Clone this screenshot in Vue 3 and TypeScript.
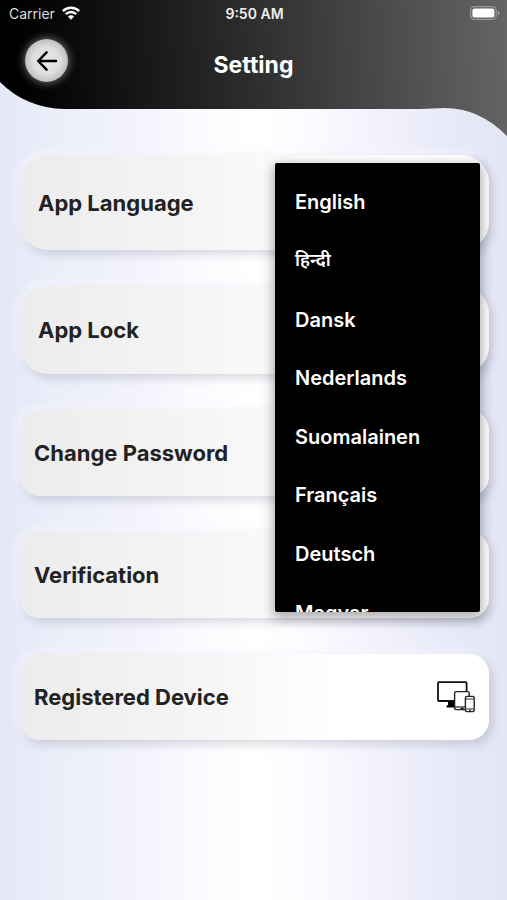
<script setup lang="ts">
import { ref } from 'vue'

interface Setting {
  label: string
  kind: 'language' | 'lock' | 'plain' | 'device'
}

interface Language {
  name: string
  code: string
}

const settings: Setting[] = [
  { label: 'App Language', kind: 'language' },
  { label: 'App Lock', kind: 'lock' },
  { label: 'Change Password', kind: 'plain' },
  { label: 'Verification', kind: 'plain' },
  { label: 'Registered Device', kind: 'device' },
]

const languages: Language[] = [
  { name: 'English', code: 'en' },
  { name: 'हिन्दी', code: 'hi' },
  { name: 'Dansk', code: 'da' },
  { name: 'Nederlands', code: 'nl' },
  { name: 'Suomalainen', code: 'fi' },
  { name: 'Français', code: 'fr' },
  { name: 'Deutsch', code: 'de' },
  { name: 'Magyar', code: 'hu' },
]

const selected = ref('en')
</script>

<template>
  <div class="screen">
    <header class="header">
      <svg class="header-shape" viewBox="0 0 507 136" preserveAspectRatio="none" aria-hidden="true">
        <defs>
          <linearGradient id="headerFill" gradientUnits="userSpaceOnUse" x1="20" y1="68" x2="507" y2="40">
            <stop offset="0" stop-color="#000" />
            <stop offset="0.25" stop-color="#171717" />
            <stop offset="0.5" stop-color="#303030" />
            <stop offset="0.75" stop-color="#4b4b4b" />
            <stop offset="1" stop-color="#646464" />
          </linearGradient>
        </defs>
        <path fill="url(#headerFill)" d="M0 0H507V136Q479 108 445 108L420 109H65A90 90 0 0 1 0 82Z" />
      </svg>
      <div class="status">
        <div class="carrier">
          <span>Carrier</span>
          <svg width="18" height="14" viewBox="0 0 18 14" aria-hidden="true">
            <g fill="none" stroke="#fff" stroke-width="2.4">
              <path d="M0.9 5.1A11.5 11.5 0 0 1 17.1 5.1" />
              <path d="M3.8 8.2A7.3 7.3 0 0 1 14.2 8.2" />
            </g>
            <path fill="#fff" d="M9 13.8L5.9 10.6A4.4 4.4 0 0 1 12.1 10.6Z" />
          </svg>
        </div>
        <time class="clock">9:50 AM</time>
        <svg class="battery" width="30" height="14" viewBox="0 0 30 14" aria-hidden="true">
          <rect x="0.6" y="0.6" width="25.6" height="12.8" rx="3.8" fill="none" stroke="#999" stroke-width="1.2" />
          <rect x="2.4" y="2.4" width="22" height="9.2" rx="2" fill="#fff" />
          <path fill="#999" d="M27.6 4.6Q29.6 5.4 29.6 7T27.6 9.4Z" />
        </svg>
      </div>
      <div class="bar">
        <button class="back" type="button" aria-label="Back">
          <svg width="22" height="22" viewBox="0 0 22 22" aria-hidden="true">
            <path
              d="M10.6 2.4L2.2 11L10.6 19.6M2.2 11H20"
              fill="none"
              stroke="#000"
              stroke-width="2.5"
              stroke-linecap="round"
              stroke-linejoin="round"
            />
          </svg>
        </button>
        <h1 class="title">Setting</h1>
      </div>
    </header>

    <main class="list">
      <section v-for="item in settings" :key="item.label" class="card" :class="item.kind">
        <h2 class="label">{{ item.label }}</h2>
        <svg v-if="item.kind === 'device'" width="38" height="32" viewBox="0 0 38 32" aria-hidden="true">
          <rect x="1" y="1.2" width="28.6" height="18.8" rx="1" fill="#fff" stroke="#111" stroke-width="1.8" />
          <path fill="#000" d="M11 20.5H18V26.5H9.6V24.6L11 24Z" />
          <rect x="17.6" y="10.6" width="14.6" height="18" rx="1.5" fill="#fff" stroke="#222" stroke-width="1.4" />
          <path d="M17.6 26H32" stroke="#222" stroke-width="1.2" />
          <rect x="23.6" y="26.8" width="3" height="1.4" fill="#111" />
          <rect x="28.4" y="15.4" width="8.8" height="15.2" rx="1.4" fill="#fff" stroke="#222" stroke-width="1.4" />
          <path d="M28.4 18H37.2M28.4 28H37.2" stroke="#333" stroke-width="1.1" />
          <rect x="32" y="28.6" width="1.8" height="1.2" fill="#111" />
        </svg>
        <div v-if="item.kind === 'language'" class="menu">
          <ul class="options">
            <li v-for="entry in languages" :key="entry.code">
              <button
                class="option"
                type="button"
                :lang="entry.code"
                :aria-pressed="selected === entry.code"
                @click="selected = entry.code"
              >
                {{ entry.name }}
              </button>
            </li>
          </ul>
        </div>
      </section>
    </main>
  </div>
</template>

<style>
body {
  background: #f1f2fc;
}
</style>

<style scoped>
.screen {
  min-height: 100vh;
  font-family: Inter, 'Noto Sans Devanagari', 'Noto Sans', sans-serif;
  background: linear-gradient(90deg, #e5e7f6 0%, #ebedf9 10%, #f2f3fd 27%, #fcfcff 41%, #fff 50%, #fbfcff 60%, #f2f3fd 73%, #e9eaf8 88%, #e4e6f5 100%);
}

.header {
  position: relative;
  height: 108px;
  color: #fff;
}

.header-shape {
  position: absolute;
  top: 0;
  left: 0;
  width: 100%;
  height: 136px;
}

.status {
  position: relative;
  display: grid;
  grid-template-columns: 1fr auto 1fr;
  align-items: center;
  height: 26px;
  padding: 0 7px 0 9px;
  font-size: 14px;
}

.carrier {
  display: flex;
  align-items: center;
  gap: 7px;
  color: #ddd;
}

.clock {
  color: #eee;
  font-weight: 600;
}

.battery {
  justify-self: end;
}

.bar {
  position: relative;
  display: grid;
  grid-template-columns: 1fr auto 1fr;
  align-items: center;
  padding: 13px 25px 0;
}

.back {
  display: flex;
  align-items: center;
  justify-content: center;
  width: 43px;
  height: 43px;
  padding: 0;
  border: 0;
  border-radius: 50%;
  background: radial-gradient(circle, #e8e8e8 0%, #dedede 45%, #bdbdbd 72%);
  box-shadow: 0 0 10px rgba(255, 255, 255, 0.5);
}

.title {
  margin: 8px 0 0;
  font-size: 23px;
  line-height: 28px;
  font-weight: 700;
}

.list {
  display: flex;
  flex-direction: column;
  gap: 36px;
  padding: 47px 18px 40px 20px;
}

.card {
  position: relative;
  display: flex;
  align-items: center;
  justify-content: space-between;
  box-sizing: border-box;
  min-height: 86px;
  padding: 0 14px;
  border-radius: 20px;
  background: linear-gradient(90deg, #ececec 0%, #f5f5f5 38%, #fff 68%);
  box-shadow:
    4px 5px 8px rgba(60, 60, 90, 0.17),
    -4px -4px 8px rgba(246, 246, 255, 0.6);
}

.language,
.lock {
  min-height: 88px;
  padding: 0 18px;
  border-radius: 28px;
}

.language {
  z-index: 1;
  min-height: 95px;
}

.label {
  margin: 0;
  color: #222;
  font-size: 22px;
  line-height: 28px;
  font-weight: 700;
}

.menu {
  position: absolute;
  top: 8px;
  right: 9px;
  width: 205px;
  height: 449px;
  box-sizing: border-box;
  padding-top: 10px;
  overflow: hidden;
  border-radius: 2px;
  background: #000;
  box-shadow: 0 4px 12px 2px rgba(0, 0, 0, 0.32);
}

.options {
  display: grid;
  grid-auto-rows: 1fr;
  height: 469px;
  margin: 0;
  padding: 0;
  list-style: none;
}

.option {
  width: 100%;
  height: 100%;
  padding: 0 20px;
  border: 0;
  background: none;
  color: #fff;
  font: inherit;
  font-size: 20px;
  font-weight: 600;
  text-align: left;
}

.option:lang(hi) {
  font-size: 18px;
}
</style>
